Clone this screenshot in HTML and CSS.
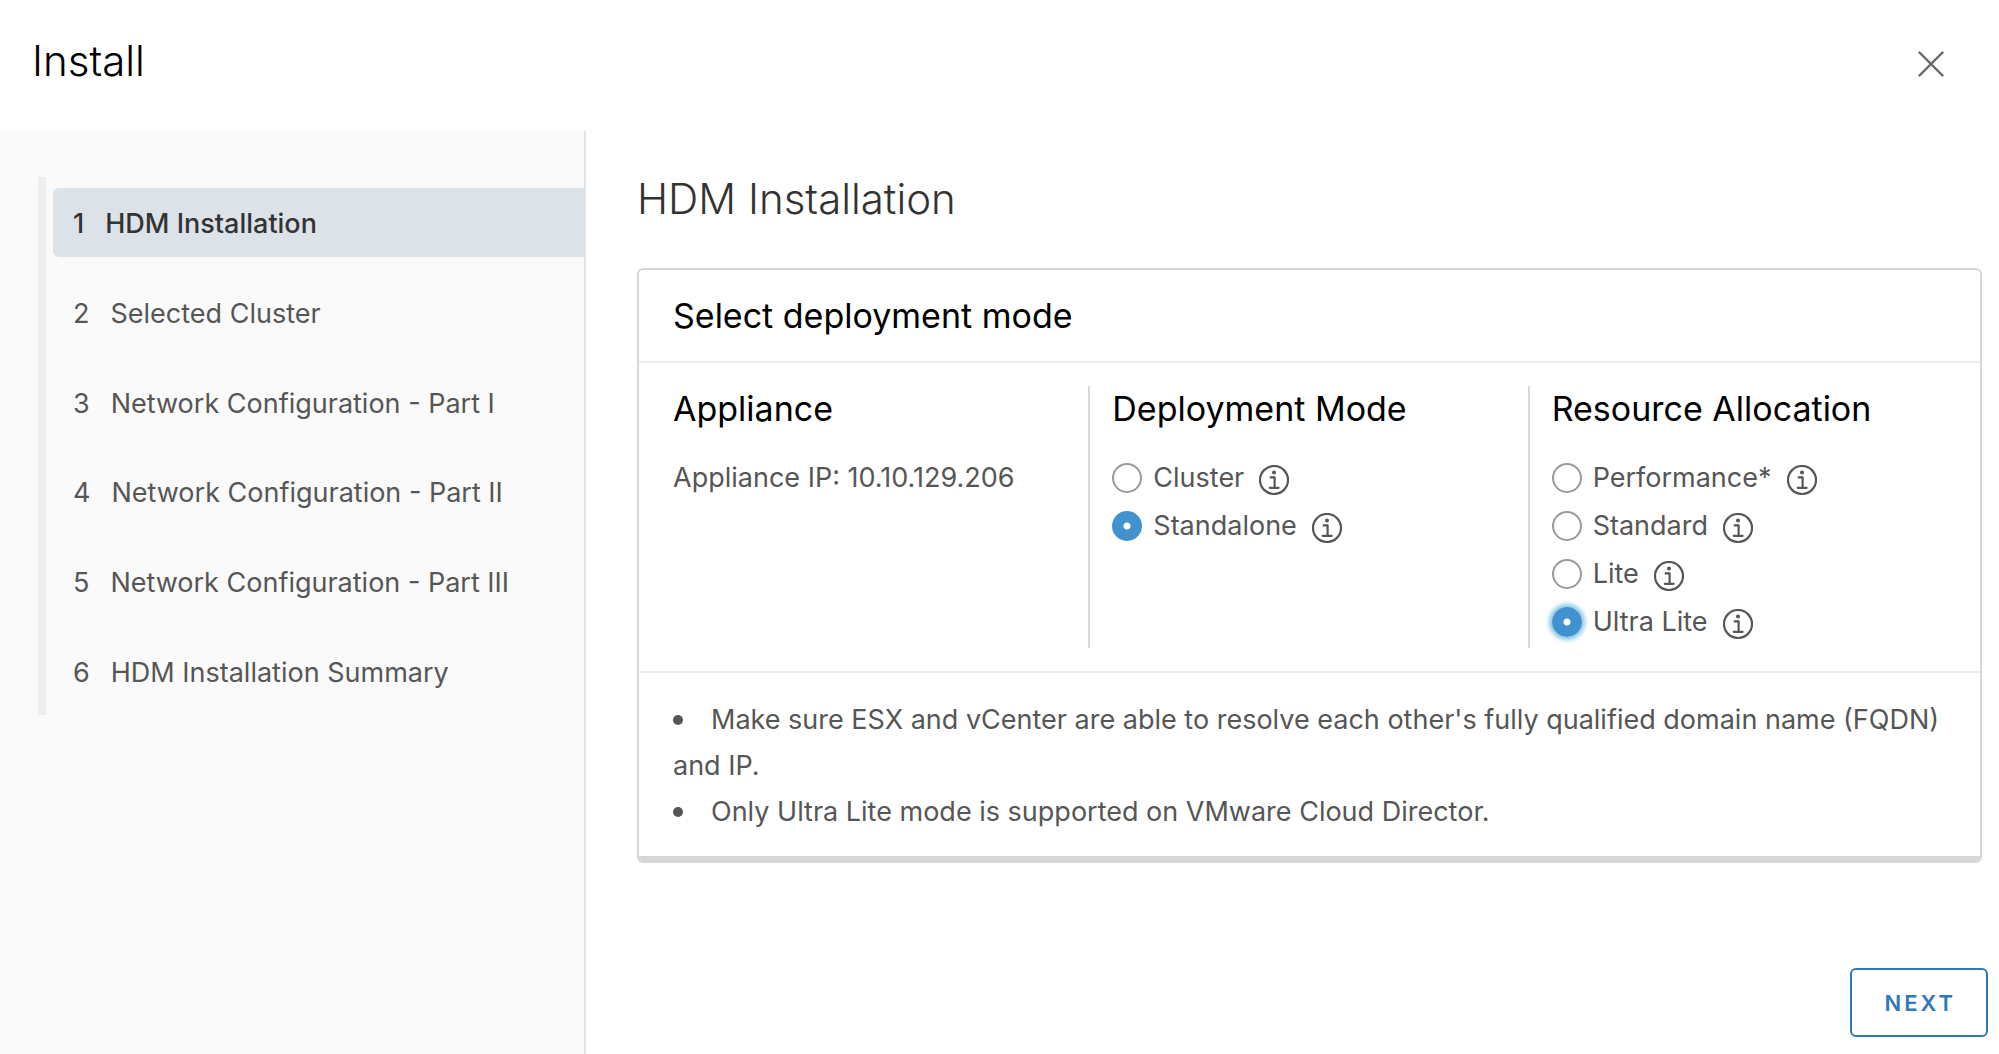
FILE: index.html
```html
<!DOCTYPE html>
<html lang="en">
<head>
  <meta charset="utf-8">
  <meta name="viewport" content="width=device-width, initial-scale=1">
  <title>Install</title>
  <link rel="stylesheet" href="styles.css">
</head>
<body>
  <svg class="sprite" aria-hidden="true">
    <symbol id="info" viewBox="0 0 30 30">
      <circle cx="15" cy="15" r="14" fill="none" stroke="currentColor" stroke-width="2.2"/>
      <circle cx="15" cy="7.4" r="2" fill="currentColor"/>
      <path d="M11.6 12.4H15.6V22.8M10.8 22.8H19.6" fill="none" stroke="currentColor" stroke-width="2.2" stroke-linecap="round" stroke-linejoin="round"/>
    </symbol>
  </svg>

  <header class="header">
    <h1 class="title">Install</h1>
    <button class="close" type="button" aria-label="Close">
      <svg class="close-icon" viewBox="0 0 26 26" aria-hidden="true">
        <path d="M1.5 1.5 24.5 24.5M24.5 1.5 1.5 24.5" fill="none" stroke="currentColor" stroke-width="2.4" stroke-linecap="round"/>
      </svg>
    </button>
  </header>

  <div class="wizard">
    <nav class="sidebar" aria-label="Steps">
      <ol class="steps">
        <li class="step"><a class="step-link active" href="#" aria-current="step"><span>1</span><span>HDM Installation</span></a></li>
        <li class="step"><a class="step-link" href="#"><span>2</span><span>Selected Cluster</span></a></li>
        <li class="step"><a class="step-link" href="#"><span>3</span><span>Network Configuration - Part I</span></a></li>
        <li class="step"><a class="step-link" href="#"><span>4</span><span>Network Configuration - Part II</span></a></li>
        <li class="step"><a class="step-link" href="#"><span>5</span><span>Network Configuration - Part III</span></a></li>
        <li class="step"><a class="step-link" href="#"><span>6</span><span>HDM Installation Summary</span></a></li>
      </ol>
    </nav>

    <main class="content">
      <h2 class="page-title">HDM Installation</h2>

      <section class="card">
        <h3 class="card-header">Select deployment mode</h3>

        <div class="columns">
          <div class="column">
            <h4 class="column-title">Appliance</h4>
            <p class="appliance">Appliance IP: 10.10.129.206</p>
          </div>

          <div class="column" role="radiogroup" aria-labelledby="mode-title">
            <h4 class="column-title" id="mode-title">Deployment Mode</h4>
            <div class="option">
              <input class="radio" type="radio" name="mode" id="cluster">
              <label for="cluster">Cluster</label>
              <button class="info" type="button" aria-label="About Cluster"><svg class="info-icon"><use href="#info"/></svg></button>
            </div>
            <div class="option">
              <input class="radio" type="radio" name="mode" id="standalone" checked>
              <label for="standalone">Standalone</label>
              <button class="info" type="button" aria-label="About Standalone"><svg class="info-icon"><use href="#info"/></svg></button>
            </div>
          </div>

          <div class="column" role="radiogroup" aria-labelledby="resource-title">
            <h4 class="column-title" id="resource-title">Resource Allocation</h4>
            <div class="option">
              <input class="radio" type="radio" name="resource" id="performance">
              <label for="performance">Performance*</label>
              <button class="info" type="button" aria-label="About Performance"><svg class="info-icon"><use href="#info"/></svg></button>
            </div>
            <div class="option">
              <input class="radio" type="radio" name="resource" id="standard">
              <label for="standard">Standard</label>
              <button class="info" type="button" aria-label="About Standard"><svg class="info-icon"><use href="#info"/></svg></button>
            </div>
            <div class="option">
              <input class="radio" type="radio" name="resource" id="lite">
              <label for="lite">Lite</label>
              <button class="info" type="button" aria-label="About Lite"><svg class="info-icon"><use href="#info"/></svg></button>
            </div>
            <div class="option">
              <input class="radio focused" type="radio" name="resource" id="ultra-lite" checked>
              <label for="ultra-lite">Ultra Lite</label>
              <button class="info" type="button" aria-label="About Ultra Lite"><svg class="info-icon"><use href="#info"/></svg></button>
            </div>
          </div>
        </div>

        <ul class="notes">
          <li class="note">Make sure ESX and vCenter are able to resolve each other's fully qualified domain name (FQDN) and IP.</li>
          <li class="note">Only Ultra Lite mode is supported on VMware Cloud Director.</li>
        </ul>
      </section>

      <footer class="footer">
        <button class="next" type="button">NEXT</button>
      </footer>
    </main>
  </div>
</body>
</html>
```
FILE: styles.css
```css
* {
  box-sizing: border-box;
}

body {
  display: flex;
  flex-direction: column;
  min-height: 100vh;
  margin: 0;
  background: #fff;
  color: #565656;
  font-family: Inter, "Open Sans", sans-serif;
  font-size: 27px;
  line-height: 46px;
}

h1, h2, h3, h4, p, ol, ul {
  margin: 0;
  padding: 0;
  font-weight: 400;
}

ol, ul {
  list-style: none;
}

button {
  padding: 0;
  border: 0;
  background: none;
  color: inherit;
  font-family: inherit;
  cursor: pointer;
}

.sprite {
  display: none;
}

.header {
  display: flex;
  align-items: center;
  justify-content: space-between;
  padding: 33px 55px 42px 32px;
}

.title,
.page-title {
  font-size: 42px;
  font-weight: 300;
  line-height: 56px;
}

.title {
  color: #000;
}

.page-title {
  color: #333;
}

.close {
  display: flex;
  padding-top: 6px;
  color: #666;
}

.close-icon {
  width: 26px;
  height: 26px;
}

.wizard {
  display: flex;
  flex: 1;
}

.sidebar {
  flex: 0 0 586px;
  padding: 46px 0 46px 38px;
  border-right: 2px solid #e3e3e3;
  background: #fafafa;
}

.steps {
  display: flex;
  flex-direction: column;
  min-height: 538px;
  padding-left: 7px;
  border-left: 8px solid #eee;
}

.step {
  display: flex;
  flex: 1;
  padding: 11px 0 10px;
}

.step-link {
  display: flex;
  flex: 1;
  align-items: center;
  gap: 21px;
  padding: 4px 20px 0;
  border-radius: 6px 0 0 6px;
  color: #565656;
  text-decoration: none;
}

.step-link.active {
  background: #dbe3e9;
  color: #333;
  font-weight: 500;
}

.content {
  display: flex;
  flex: 1;
  flex-direction: column;
  min-width: 0;
  padding: 40px 11px 17px 51px;
}

.card {
  margin: 41px 6px 0 0;
  border: 2px solid #d7d7d7;
  border-bottom-width: 7px;
  border-radius: 6px;
}

.card-header {
  padding: 23px 34px 22px;
  border-bottom: 2px solid #eee;
  color: #000;
  font-size: 34px;
}

.columns {
  display: grid;
  grid-template-columns: repeat(3, 1fr);
  padding: 23px 13px 23px 10px;
  border-bottom: 2px solid #eee;
}

.column {
  padding: 0 22px 2px 24px;
}

.column + .column {
  padding-left: 22px;
  border-left: 2px solid #d7d7d7;
}

.column-title {
  margin-bottom: 22px;
  color: #000;
  font-size: 34px;
}

.appliance {
  line-height: 48px;
}

.option {
  display: flex;
  align-items: center;
  height: 48px;
}

.radio {
  flex: none;
  width: 30px;
  height: 30px;
  margin: 0 11px 0 0;
  border: 2px solid #9a9a9a;
  border-radius: 50%;
  background: #fff;
  appearance: none;
}

.radio:checked {
  border-color: #4192cf;
  background: radial-gradient(circle, #fff 3px, #4192cf 4px);
}

.radio.focused {
  box-shadow: 0 0 4px 3px #8cc8e6;
}

.info {
  display: flex;
  margin: 4px 0 0 15px;
}

.info-icon {
  width: 30px;
  height: 30px;
}

.notes {
  padding: 24px 34px 21px;
}

.note::before {
  display: inline-block;
  width: 10px;
  height: 10px;
  margin-right: 28px;
  border-radius: 50%;
  background: currentColor;
  vertical-align: 4px;
  content: "";
}

.footer {
  display: flex;
  justify-content: flex-end;
  margin-top: auto;
  padding-top: 40px;
}

.next {
  padding: 10px 30px 9px 32px;
  border: 2px solid #2f79b9;
  border-radius: 6px;
  color: #2f79b9;
  font-size: 22px;
  font-weight: 600;
  line-height: 46px;
  letter-spacing: 3px;
}
```
